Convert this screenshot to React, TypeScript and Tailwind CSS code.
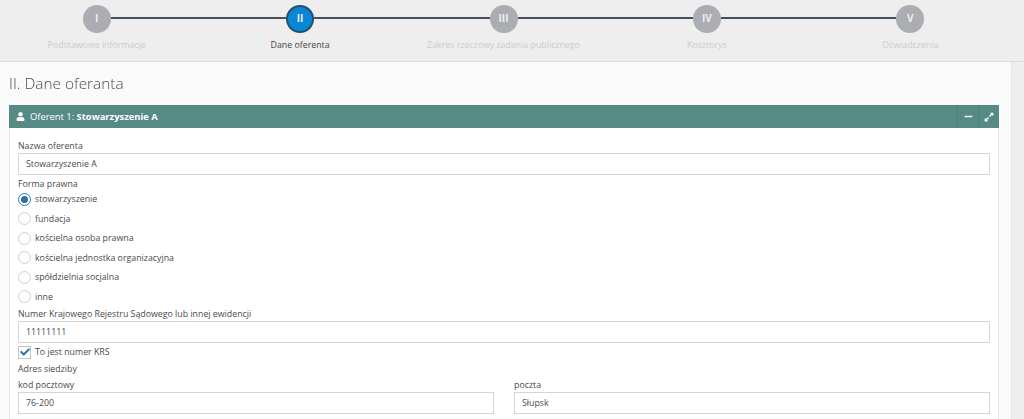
import React from 'react'
import { FaUser, FaMinus, FaExpandAlt, FaCheck } from 'react-icons/fa'

const font = { fontFamily: '"Open Sans", "Liberation Sans", sans-serif' }

const steps = [
  { roman: 'I', label: 'Podstawowe informacje' },
  { roman: 'II', label: 'Dane oferenta', active: true },
  { roman: 'III', label: 'Zakres rzeczowy zadania publicznego' },
  { roman: 'IV', label: 'Kosztorys' },
  { roman: 'V', label: 'Oświadczenia' },
]

const forms = [
  'stowarzyszenie',
  'fundacja',
  'kościelna osoba prawna',
  'kościelna jednostka organizacyjna',
  'spółdzielnia socjalna',
  'inne',
]

const Stepper = () => (
  <div className="h-[62px] shrink-0 border-b border-[#dcdcdc] bg-[#eeeeee] pr-[12px]">
    <div className="-ml-[5px] grid grid-cols-5 pt-[4px]">
      {steps.map((step, i) => (
        <div key={step.roman} className="flex flex-col items-center">
          <div className="flex h-[29px] w-full items-center">
            <div className={`mb-px h-[2px] flex-1 ${i === 0 ? '' : 'bg-[#44505c]'}`} />
            <div
              className={`flex h-[28px] w-[28px] items-center justify-center rounded-full text-[10px] font-bold text-[#eeeeee] ${
                step.active ? 'border-2 border-[#24506f] bg-[#0a87d4]' : 'bg-[#abadb2]'
              }`}
            >
              {step.roman}
            </div>
            <div className={`mb-px h-[2px] flex-1 ${i === 4 ? '' : 'bg-[#44505c]'}`} />
          </div>
          <div className={`mt-[5px] text-[8.8px] leading-[14px] ${step.active ? 'text-[#444444]' : 'text-[#cccccc]'}`}>
            {step.label}
          </div>
        </div>
      ))}
    </div>
  </div>
)

const Label = ({ text, className = '' }: { text: string; className?: string }) => (
  <div className={`text-[8.8px] leading-[14px] text-[#4a4a4a] ${className}`}>{text}</div>
)

const Input = ({ value }: { value: string }) => (
  <div className="flex h-[22px] items-center border border-[#d5d5d5] bg-white pt-px pl-[7px] text-[8.8px] text-[#4a4a4a]">
    {value}
  </div>
)

const Radio = ({ text, checked }: { text: string; checked?: boolean }) => (
  <div className="flex h-[19.5px] items-center gap-[4px]">
    <div
      className={`flex h-[13px] w-[13px] items-center justify-center rounded-full border bg-white ${
        checked ? 'border-[#2f78b0]' : 'border-[#cfcfcf]'
      }`}
    >
      {checked && <div className="h-[7px] w-[7px] rounded-full bg-[#2f6f9f]" />}
    </div>
    <span className="pt-px text-[8.8px] text-[#4a4a4a]">{text}</span>
  </div>
)

export default function App() {
  return (
    <div className="flex h-[419px] w-[1024px] flex-col overflow-hidden bg-[#eeeeee]" style={font}>
      <Stepper />
      <div className="mr-[12px] flex-1 rounded-tr-[3px] border-r border-[#e2e2e2] bg-[#fafafa] pr-[12px] pl-[9px]">
        <h1 className="pt-[12px] text-[15.4px] leading-[20px] font-light text-[#4d4d4d] will-change-transform">
          II. Dane oferanta
        </h1>
        <div className="mt-[11px] border-x border-[#e6e6e6] bg-white">
          <div className="-mx-px flex h-[23px] items-center bg-[#568a85] pl-[7px] text-[9.4px] text-white">
            <FaUser className="h-[9px] w-[9px]" />
            <span className="mt-px ml-[5px]">
              Oferent 1: <b>Stowarzyszenie A</b>
            </span>
            <div className="ml-auto flex h-full">
              <div className="flex w-[21px] items-center justify-center border-l border-[#4e807b]">
                <FaMinus className="h-[9px] w-[9px]" />
              </div>
              <div className="flex w-[21px] items-center justify-center border-l border-[#4e807b]">
                <FaExpandAlt className="h-[10px] w-[10px]" />
              </div>
            </div>
          </div>
          <div className="px-[8px] pt-[11px] pb-[10px]">
            <Label text="Nazwa oferenta" />
            <Input value="Stowarzyszenie A" />
            <Label text="Forma prawna" className="mt-[2px]" />
            <div className="mt-[-1.5px]">
              {forms.map((f, i) => (
                <Radio key={f} text={f} checked={i === 0} />
              ))}
            </div>
            <Label text="Numer Krajowego Rejestru Sądowego lub innej ewidencji" className="mt-[0.5px]" />
            <Input value="11111111" />
            <div className="mt-[2px] flex h-[14px] items-center gap-[4px]">
              <div className="flex h-[13px] w-[13px] items-center justify-center border border-[#b9c7d3] bg-white text-[#2f6f9f]">
                <FaCheck className="h-[10px] w-[10px]" />
              </div>
              <span className="pt-px text-[8.8px] text-[#4a4a4a]">To jest numer KRS</span>
            </div>
            <Label text="Adres siedziby" className="mt-[3px]" />
            <div className="mt-[2px] grid grid-cols-2 gap-[20px]">
              <div>
                <Label text="kod pocztowy" />
                <Input value="76-200" />
              </div>
              <div>
                <Label text="poczta" />
                <Input value="Słupsk" />
              </div>
            </div>
          </div>
        </div>
      </div>
    </div>
  )
}
